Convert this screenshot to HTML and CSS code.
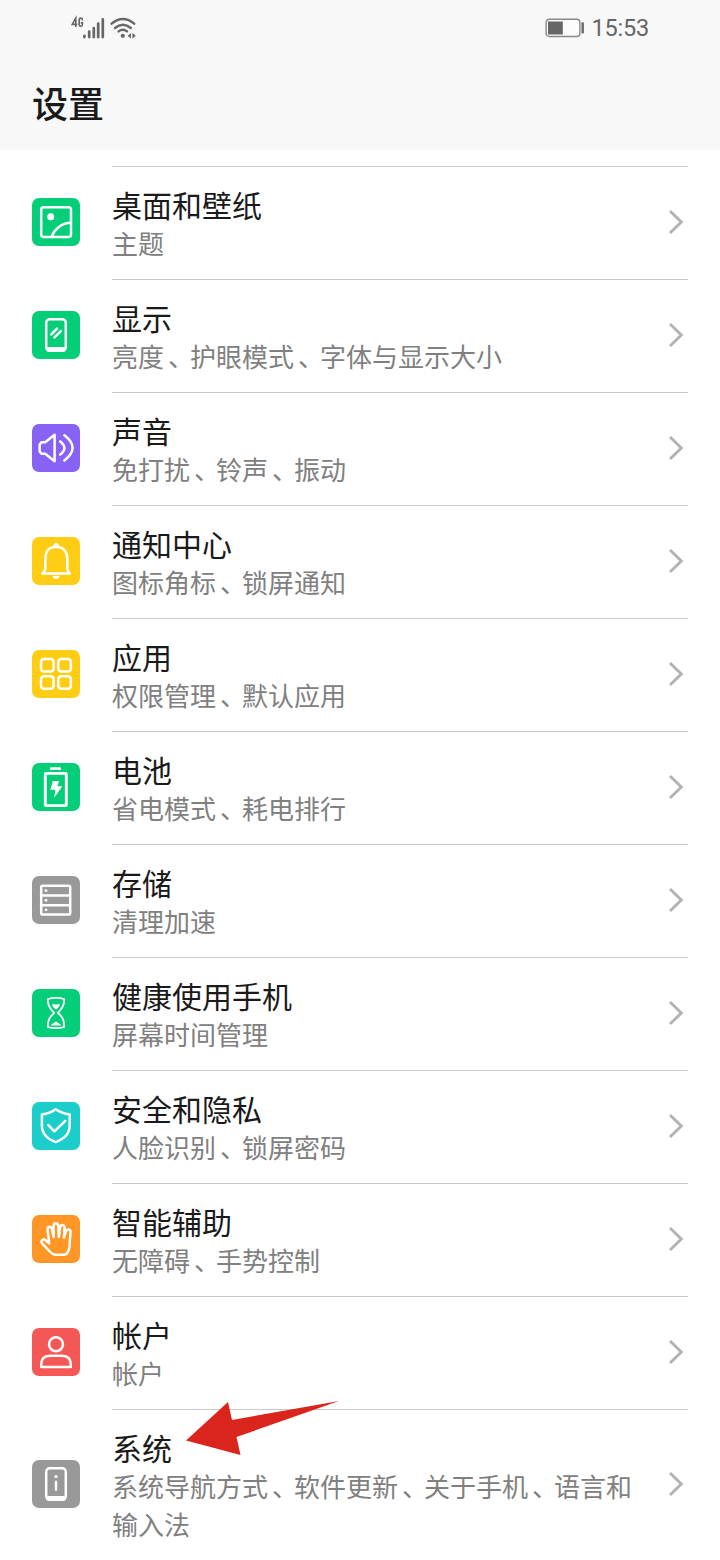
FILE: index.html
```html
<!DOCTYPE html>
<html lang="zh-CN">
<head>
<meta charset="utf-8">
<title>设置</title>
<link rel="stylesheet" href="styles.css">
</head>
<body>
<header class="header">
  <div class="status">
    <div class="status-left">
      <svg width="66" height="26" viewBox="0 0 66 26" fill="none">
        <g stroke="#666" stroke-width="1.6">
          <path d="M4.8 13V4L1.2 10.4H6.4"/>
          <path d="M11.4 6.4V5.7Q11.4 4.1 9.8 4.1Q8.2 4.1 8.2 5.7V10.6Q8.2 12.3 9.8 12.3Q11.4 12.3 11.4 10.6V8.9H9.8"/>
        </g>
        <g stroke="#666" stroke-width="2.7" stroke-linecap="round">
          <path d="M13.4 21.9V23.1M18.2 17.5V23.1M22.8 14V23.1M27.2 9.5V23.1M31.8 5.4V23.1"/>
          <path d="M40.6 9.7Q51.9 0.3 63.2 9.7" stroke-width="2.4"/>
          <path d="M44 14Q51.9 7.5 59.8 14" stroke-width="2.4"/>
          <path d="M47.6 17.4Q51.7 14.2 56 17.4" stroke-width="2.4"/>
        </g>
        <circle cx="51.8" cy="21.8" r="2.1" fill="#666"/>
        <path d="M60 19V24.6L56.6 21.8ZM61.4 19V24.6L64.8 21.8Z" fill="#666"/>
      </svg>
    </div>
    <div class="status-right">
      <svg width="40" height="20" viewBox="0 0 40 20">
        <rect x="1.1" y="1.2" width="33.8" height="17.3" rx="3.2" fill="#fcfcfc" stroke="#888" stroke-width="1.4"/>
        <rect x="3" y="3.5" width="14.8" height="13" fill="#666"/>
        <rect x="36.5" y="4.3" width="2.4" height="11.2" rx="1" fill="#666"/>
      </svg>
      <span class="clock">15:53</span>
    </div>
  </div>
  <h1 class="title">设置</h1>
</header>
<main class="list">
  <div class="row">
    <svg class="icon green" viewBox="0 0 48 48"><rect x="9.2" y="9.2" width="29.8" height="29.8" rx="2.5"/><circle class="solid" cx="18.7" cy="18.8" r="3.5"/><path d="M19.5 39C22.5 31 29.5 25 39 24.8"/></svg>
    <div class="body"><div class="text"><div class="name">桌面和壁纸</div><div class="desc">主题</div></div><svg class="chevron" viewBox="0 0 16 28"><path d="M2 3L13.3 14L2 25"/></svg></div>
  </div>
  <div class="row">
    <svg class="icon green" viewBox="0 0 48 48"><rect x="14.2" y="8.3" width="19.6" height="31.4" rx="3.5"/><path class="solid" d="M14 36H34V37.5Q34 41 30.5 41H17.5Q14 41 14 37.5Z"/><path d="M19.3 23.4L25 17.6M22.4 26.3L28.8 20.2"/></svg>
    <div class="body"><div class="text"><div class="name">显示</div><div class="desc">亮度<i class="sep">、</i>护眼模式<i class="sep">、</i>字体与显示大小</div></div><svg class="chevron" viewBox="0 0 16 28"><path d="M2 3L13.3 14L2 25"/></svg></div>
  </div>
  <div class="row">
    <svg class="icon purple" viewBox="0 0 48 48"><path d="M13.2 18.3H9.5L7.6 20.6V27.4L9.5 29.7H13.2L22.6 37.2V10.8L13.2 18.3"/><path d="M28.2 17.4Q36.6 24 28.2 30.6M32.4 11.2Q48.8 23.7 32.4 36.5"/></svg>
    <div class="body"><div class="text"><div class="name">声音</div><div class="desc">免打扰<i class="sep">、</i>铃声<i class="sep">、</i>振动</div></div><svg class="chevron" viewBox="0 0 16 28"><path d="M2 3L13.3 14L2 25"/></svg></div>
  </div>
  <div class="row">
    <svg class="icon yellow" viewBox="0 0 48 48"><path d="M10.2 36.5H37.8L35.3 32.6V21.5C35.3 14.5 31 9.8 24 9.8S13.4 14.5 13.4 21.5V32.6L10.6 36.5"/><circle class="solid" cx="24.2" cy="8.7" r="2.6"/><path class="solid" d="M20.3 38.7H27.9Q26.9 42 24.1 42Q21.3 42 20.3 38.7Z"/></svg>
    <div class="body"><div class="text"><div class="name">通知中心</div><div class="desc">图标角标<i class="sep">、</i>锁屏通知</div></div><svg class="chevron" viewBox="0 0 16 28"><path d="M2 3L13.3 14L2 25"/></svg></div>
  </div>
  <div class="row">
    <svg class="icon yellow" viewBox="0 0 48 48"><rect x="9" y="9.1" width="12.6" height="12.4" rx="3"/><rect x="26.3" y="9.1" width="12.6" height="12.4" rx="3"/><rect x="9" y="26.2" width="12.6" height="12.6" rx="3"/><rect x="26.3" y="26.2" width="12.6" height="12.6" rx="3"/></svg>
    <div class="body"><div class="text"><div class="name">应用</div><div class="desc">权限管理<i class="sep">、</i>默认应用</div></div><svg class="chevron" viewBox="0 0 16 28"><path d="M2 3L13.3 14L2 25"/></svg></div>
  </div>
  <div class="row">
    <svg class="icon green" viewBox="0 0 48 48"><rect class="wide" x="13.3" y="10.4" width="21" height="32.2" rx=".8"/><rect class="solid" x="18" y="4.2" width="11" height="2.8" rx="1"/><path class="solid" d="M20.9 18H27.2L25.3 23.2H30.3L22.2 34.7L23.4 26.7H18.3Z"/></svg>
    <div class="body"><div class="text"><div class="name">电池</div><div class="desc">省电模式<i class="sep">、</i>耗电排行</div></div><svg class="chevron" viewBox="0 0 16 28"><path d="M2 3L13.3 14L2 25"/></svg></div>
  </div>
  <div class="row">
    <svg class="icon gray" viewBox="0 0 48 48"><rect x="9.2" y="9.7" width="29" height="28.8" rx="1.6"/><path d="M9 19.6H38M9 29.2H38"/><circle class="solid" cx="14" cy="14.6" r="1.4"/><circle class="solid" cx="14" cy="24.3" r="1.4"/><circle class="solid" cx="14" cy="33.8" r="1.4"/></svg>
    <div class="body"><div class="text"><div class="name">存储</div><div class="desc">清理加速</div></div><svg class="chevron" viewBox="0 0 16 28"><path d="M2 3L13.3 14L2 25"/></svg></div>
  </div>
  <div class="row">
    <svg class="icon green" viewBox="0 0 48 48"><path class="thin" d="M15.8 10Q24 7.6 32.2 10C32.6 17 29.6 20.4 25.8 23.8C30.6 28 32.3 31 32.2 38Q24 40.4 15.8 38C15.7 31 17.6 28 22.2 23.8C18.4 20.4 15.4 17 15.8 10Z"/><path class="solid" d="M24 20.6Q19.8 17.4 20.2 15.4Q22.4 14.4 24 16Q25.6 14.4 27.8 15.4Q28.2 17.4 24 20.6ZM18.6 36.5Q20 34.7 22 34Q24 31.7 26 34Q28 34.7 29.4 36.5Z"/></svg>
    <div class="body"><div class="text"><div class="name">健康使用手机</div><div class="desc">屏幕时间管理</div></div><svg class="chevron" viewBox="0 0 16 28"><path d="M2 3L13.3 14L2 25"/></svg></div>
  </div>
  <div class="row">
    <svg class="icon cyan" viewBox="0 0 48 48"><path d="M23.7 7.3Q29.5 11.3 37.7 12.6V23.5C37.7 32 32 37 23.7 40.1C15.4 37 9.9 32 9.9 23.5V12.6Q18 11.3 23.7 7.3Z"/><path d="M16.4 23.2L22.4 29.4L33.3 18.8"/></svg>
    <div class="body"><div class="text"><div class="name">安全和隐私</div><div class="desc">人脸识别<i class="sep">、</i>锁屏密码</div></div><svg class="chevron" viewBox="0 0 16 28"><path d="M2 3L13.3 14L2 25"/></svg></div>
  </div>
  <div class="row">
    <svg class="icon orange" viewBox="0 0 48 48"><path d="M17.2 28.4L15.6 14.6Q15.5 12.1 17.3 11.7Q19.1 11.5 19.7 13.8L21.8 22L21.5 11.3Q21.7 8.2 23.9 8.2Q26 8.2 26.3 11.3L26.8 21.9L28.1 12.3Q28.6 9.8 30.7 10.1Q32.7 10.6 32.6 13L31.9 22.6L34 16.2Q35 13.9 37.2 14.6Q38.9 15.4 38.5 17.5L37.4 32.5Q36.2 39.6 31.8 39.7H23.2Q20.3 39.3 17.8 36.5L10.1 28.3Q8.6 26.4 10.4 25Q12 23.9 14.1 25.7Z"/></svg>
    <div class="body"><div class="text"><div class="name">智能辅助</div><div class="desc">无障碍<i class="sep">、</i>手势控制</div></div><svg class="chevron" viewBox="0 0 16 28"><path d="M2 3L13.3 14L2 25"/></svg></div>
  </div>
  <div class="row">
    <svg class="icon red" viewBox="0 0 48 48"><circle cx="24" cy="16.3" r="7"/><path d="M9.2 38.9V36.5C9.2 30.5 12 27.7 18 27.7H30C36 27.7 38.8 30.5 38.8 36.5V38.9Z"/></svg>
    <div class="body"><div class="text"><div class="name">帐户</div><div class="desc">帐户</div></div><svg class="chevron" viewBox="0 0 16 28"><path d="M2 3L13.3 14L2 25"/></svg></div>
  </div>
  <div class="row">
    <svg class="icon gray" viewBox="0 0 48 48"><rect x="14.2" y="8.3" width="19.6" height="31.4" rx="3.5"/><path class="solid" d="M14 36H34V37.5Q34 41 30.5 41H17.5Q14 41 14 37.5Z"/><circle class="solid" cx="24" cy="16.6" r="1.7"/><path d="M24 21.8V29.4"/></svg>
    <div class="body"><div class="text"><div class="name">系统</div><div class="desc">系统导航方式<i class="sep">、</i>软件更新<i class="sep">、</i>关于手机<i class="sep">、</i>语言和输入法</div></div><svg class="chevron" viewBox="0 0 16 28"><path d="M2 3L13.3 14L2 25"/></svg></div>
    <svg class="pointer" viewBox="0 0 154 56"><path d="M0 39.5L42 1L46 19L153 0L50.5 36L54.5 54Z"/></svg>
  </div>
</main>
</body>
</html>
```
FILE: styles.css
```css
* { box-sizing: border-box; }
body {
  margin: 0;
  width: 720px;
  height: 1560px;
  overflow: hidden;
  background: #fff;
  font-family: "Noto Sans CJK SC", sans-serif;
  color: #1a1a1a;
}
.header { height: 150px; background: #f8f8f8; }
.status {
  height: 56px;
  padding: 0 71px;
  display: flex;
  justify-content: space-between;
  align-items: center;
}
.status svg { display: block; }
.status-left { padding-bottom: 3px; }
.status-right { display: flex; align-items: center; gap: 6px; }
.clock { font: 23.5px/28px Roboto, sans-serif; color: #666; letter-spacing: -0.2px; }
.title {
  margin: 0;
  padding: 20px 32px 0;
  font-size: 36px;
  line-height: 52px;
  font-weight: 500;
}
.list { padding-top: 16px; }
.row {
  position: relative;
  display: flex;
  align-items: center;
  gap: 32px;
  padding: 0 32px;
}
.icon {
  width: 48px;
  height: 48px;
  flex: none;
  margin-bottom: 1px;
  border-radius: 7px;
  fill: none;
  stroke: #fff;
  stroke-width: 2.5;
  stroke-linecap: round;
  stroke-linejoin: round;
}
.icon .solid { fill: #fff; stroke: none; }
.icon .wide { stroke-width: 2.9; }
.icon .thin { stroke-width: 1.8; }
.green { background: #05ce78; }
.purple { background: #8762f5; }
.yellow { background: #ffce14; }
.gray { background: #999; }
.cyan { background: #1bcecb; }
.orange { background: #ff9626; }
.red { background: #f55656; }
.body {
  flex: 1;
  display: flex;
  align-items: center;
  justify-content: space-between;
  border-top: 1px solid #c9c9c9;
  padding: 18px 4px 17px 0;
}
.text { width: 524px; }
.name { margin-bottom: 1px; font-size: 30px; line-height: 38px; }
.desc { font-size: 26px; line-height: 38px; color: #808080; }
/* Half-width comma, centred in its full-width cell */
.sep {
  font-style: normal;
  font-feature-settings: "halt";
  padding: 0 9px 0 4px;
}
.chevron {
  width: 16px;
  height: 28px;
  flex: none;
  margin-bottom: 3px;
  fill: none;
  stroke: #b2b2b2;
  stroke-width: 2.9;
}
.pointer {
  position: absolute;
  left: 186px;
  top: -8px;
  width: 154px;
  height: 56px;
  fill: #da251c;
}
```
